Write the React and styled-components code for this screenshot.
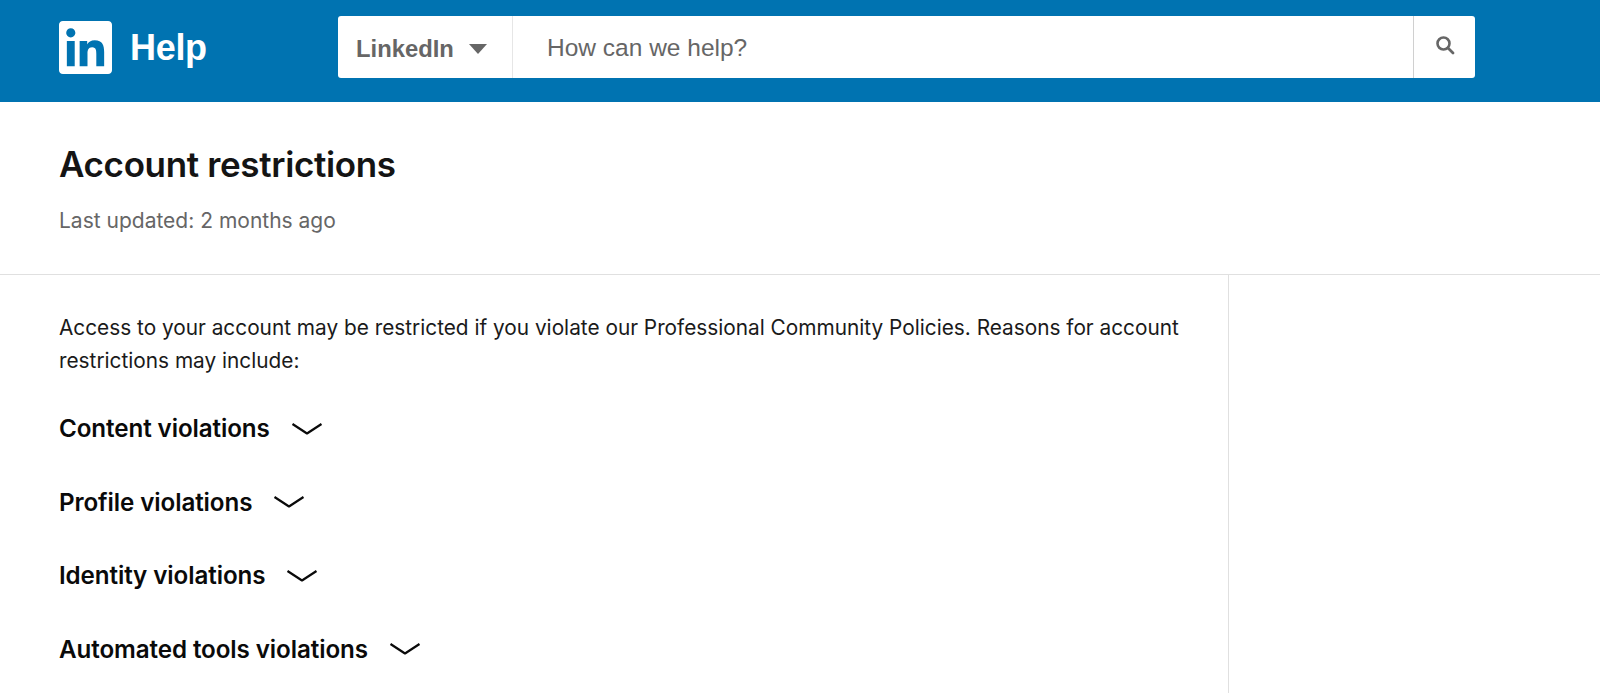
import styled, { createGlobalStyle } from 'styled-components';
import { SiLinkedin } from 'react-icons/si';

const GlobalStyle = createGlobalStyle`
  html, body {
    margin: 0;
    height: 100%;
    overflow: hidden;
    background: #fff;
    font-family: Inter, "Liberation Sans", sans-serif;
  }
`;

const Header = styled.header`
  display: flex;
  align-items: center;
  height: 102px;
  padding: 0 0 0 59px;
  background: #0073b1;
  box-sizing: border-box;
`;

const Logo = styled.div`
  display: flex;
  align-items: center;
  gap: 18px;
  width: 279px;
  margin-top: -7px;
  color: #fff;
`;

const HelpLabel = styled.span`
  font-family: "Liberation Sans", sans-serif;
  font-weight: 700;
  font-size: 36px;
  letter-spacing: -0.3px;
`;

const SearchBar = styled.div`
  display: flex;
  width: 1137px;
  height: 62px;
  margin-top: -8px;
  background: #fff;
  border-radius: 3px;
`;

const Scope = styled.div`
  display: flex;
  align-items: center;
  gap: 15px;
  width: 175px;
  padding: 3px 0 0 18px;
  box-sizing: border-box;
  border-right: 1px solid #e6e6e6;
  font-family: "Liberation Sans", sans-serif;
  font-weight: 700;
  font-size: 23.8px;
  color: #666;
`;

const Caret = styled.span`
  width: 0;
  height: 0;
  border-left: 9px solid transparent;
  border-right: 9px solid transparent;
  border-top: 10px solid #666;
`;

const Query = styled.div`
  flex: 1;
  display: flex;
  align-items: center;
  padding: 2px 0 0 34px;
  font-family: "Liberation Sans", sans-serif;
  font-size: 24.5px;
  color: #666;
`;

const SearchButton = styled.div`
  display: flex;
  align-items: center;
  justify-content: center;
  width: 62px;
  border-left: 1px solid #d0d0d0;
  padding-bottom: 4px;
  box-sizing: border-box;
`;

const TitleBlock = styled.section`
  height: 173px;
  padding: 41px 0 0 59px;
  box-sizing: border-box;
  border-bottom: 1px solid #e0e0e0;
`;

const Title = styled.h1`
  margin: 0;
  font-size: 35px;
  line-height: 42px;
  font-weight: 600;
  letter-spacing: -0.35px;
  color: #141414;
`;

const Updated = styled.p`
  margin: 23px 0 0;
  font-size: 21px;
  line-height: 26px;
  color: #666;
`;

const Columns = styled.div`
  display: grid;
  grid-template-columns: 1229px 1fr;
`;

const Main = styled.main`
  height: 418px;
  padding: 36px 0 0 59px;
  box-sizing: border-box;
  border-right: 1px solid #e0e0e0;
`;

const Intro = styled.p`
  margin: 0 0 15px;
  width: 1150px;
  font-size: 20.8px;
  line-height: 33px;
  color: #1a1a1a;
`;

const Section = styled.div`
  display: flex;
  align-items: center;
  gap: 21px;
  height: 73.5px;
`;

const SectionTitle = styled.span`
  font-size: 24.2px;
  font-weight: 600;
  letter-spacing: -0.1px;
  color: #0a0a0a;
`;

const Chevron = () => (
  <svg width="32" height="14" viewBox="0 0 32 14" fill="none">
    <path d="M1.5 2 L16 11.5 L30.5 2" stroke="#0a0a0a" strokeWidth="2.2" strokeLinejoin="round" />
  </svg>
);

const SearchIcon = () => (
  <svg width="20" height="20" viewBox="0 0 20 20" fill="none">
    <circle cx="8.5" cy="8.5" r="6" stroke="#666" strokeWidth="2.6" />
    <path d="M13 13 L18 18" stroke="#666" strokeWidth="2.8" strokeLinecap="round" />
  </svg>
);

const violations = [
  'Content violations',
  'Profile violations',
  'Identity violations',
  'Automated tools violations',
];

const App = () => {
  return (
    <>
      <GlobalStyle />
      <Header>
        <Logo>
          <SiLinkedin size={53} />
          <HelpLabel>Help</HelpLabel>
        </Logo>
        <SearchBar>
          <Scope>
            LinkedIn
            <Caret />
          </Scope>
          <Query>How can we help?</Query>
          <SearchButton>
            <SearchIcon />
          </SearchButton>
        </SearchBar>
      </Header>
      <TitleBlock>
        <Title>Account restrictions</Title>
        <Updated>Last updated: 2 months ago</Updated>
      </TitleBlock>
      <Columns>
        <Main>
          <Intro>
            Access to your account may be restricted if you violate our Professional Community
            Policies. Reasons for account restrictions may include:
          </Intro>
          {violations.map((v) => (
            <Section key={v}>
              <SectionTitle>{v}</SectionTitle>
              <Chevron />
            </Section>
          ))}
        </Main>
      </Columns>
    </>
  );
};

export default App;
